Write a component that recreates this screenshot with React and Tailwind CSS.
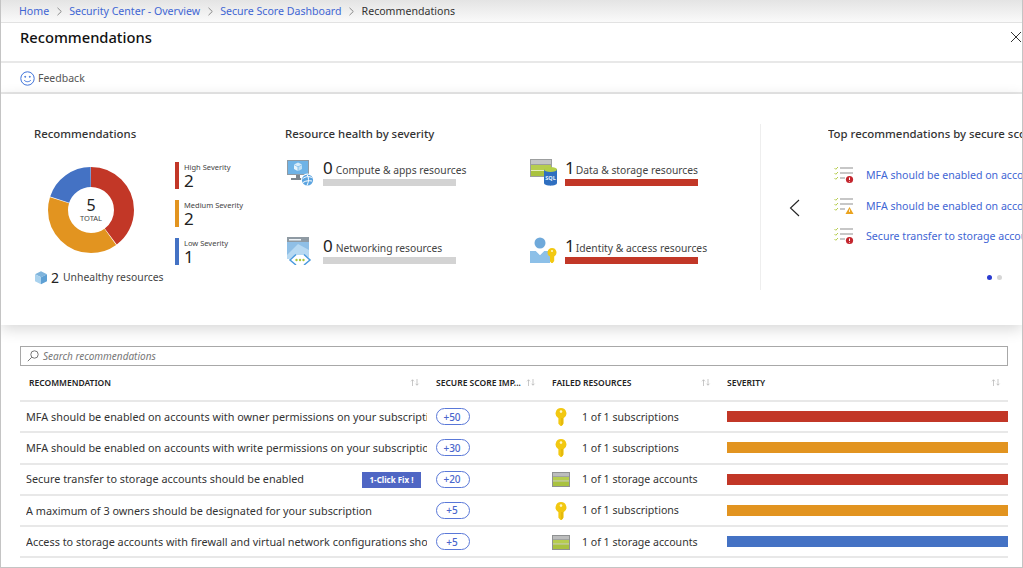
import React from "react";

const Key = ({ className = "" }) => (
  <svg width="12" height="18" viewBox="0 0 12 18" className={`shrink-0 ${className}`}>
    <path d="M6 0a5.500 5.500 0 0 1 2.600 10.300V15.500L6.800 18H5.600L3.400 15.800v-5.500A5.500 5.500 0 0 1 6 0z" fill="#f2c811" />
    <circle cx="6" cy="3.600" r="1.300" fill="#fff6c4" />
    <path d="M7 10v7" stroke="#d8ab0a" strokeWidth="1" />
  </svg>
);

const Storage = ({ w = 18, h = 15 }) => (
  <svg width={w} height={h} viewBox="0 0 18 15" className="shrink-0">
    <rect width="18" height="15" fill="#8f9192" />
    <rect x="1" y="1" width="16" height="3.400" fill="#bcbdbd" />
    <rect x="1" y="5" width="16" height="3.600" fill="#b6cd4e" />
    <rect x="1" y="8.600" width="16" height="1" fill="#e6efb8" />
    <rect x="1" y="9.600" width="16" height="4.400" fill="#a9c23f" />
  </svg>
);

const Smile = () => (
  <svg width="15" height="15" viewBox="0 0 15 15" fill="none" stroke="#3f73d9" strokeWidth="1" className="shrink-0">
    <circle cx="7.500" cy="7.500" r="6.700" />
    <circle cx="5.200" cy="5.800" r="0.500" fill="#3f73d9" />
    <circle cx="9.800" cy="5.800" r="0.500" fill="#3f73d9" />
    <path d="M4.200 9.200c1.600 2 5 2 6.600 0" />
  </svg>
);

const Chevron = () => (
  <svg width="7" height="9" viewBox="0 0 6 9" fill="none" stroke="#8a8a8a" strokeWidth="1" className="mx-[6.500px] shrink-0">
    <path d="M1 .8 4.800 4.500 1 8.200" />
  </svg>
);

const Donut = () => {
  const R = 33;
  const C = 2 * Math.PI * R;
  const segs = [
    { c: "#c23727", len: 0.4, off: 0 },
    { c: "#e29420", len: 0.4, off: 0.4 },
    { c: "#4472c4", len: 0.2, off: 0.8 },
  ];
  return (
    <svg width="88" height="88" viewBox="0 0 88 88" className="block">
      <g transform="rotate(-90 44 44)">
        {segs.map((s) => (
          <circle
            key={s.c}
            cx="44"
            cy="44"
            r={R}
            fill="none"
            stroke={s.c}
            strokeWidth="20"
            strokeDasharray={`${s.len * C - 0.6} ${C}`}
            strokeDashoffset={-s.off * C}
          />
        ))}
      </g>
    </svg>
  );
};

const Cube = () => (
  <svg width="12" height="14" viewBox="0 0 14 16" className="ml-[1px] shrink-0">
    <path d="M7 0 14 3.600 7 7.200 0 3.600z" fill="#7fb4dc" />
    <path d="M0 3.600 7 7.200v8.200L0 11.800z" fill="#a9d2ee" />
    <path d="M14 3.600 7 7.200v8.200l7-3.600z" fill="#5ea0d4" />
  </svg>
);

const ComputeIcon = () => (
  <svg width="27" height="28" viewBox="0 0 27 28">
    <rect x="0" y="1" width="22" height="15" fill="#8f9aa3" />
    <rect x="1" y="2" width="20" height="13" fill="#6fb3e6" />
    <path d="M11 3.500l4 2-4 2-4-2z" fill="#d7ecfa" />
    <path d="M7 6l3.600 2v4L7 10z" fill="#e9f5fc" />
    <path d="M15 6l-3.600 2v4l3.600-2z" fill="#bfe0f5" />
    <rect x="9" y="16" width="4" height="3" fill="#7c868e" />
    <rect x="4" y="19" width="12" height="2" fill="#7c868e" />
    <circle cx="20.500" cy="21" r="6.500" fill="#fff" />
    <circle cx="20.500" cy="21" r="5.600" fill="#5ba4e0" />
    <path d="M15.500 20c3-3 7-3 10-1M16 23.500c3-2 6-2 9-1.500M20 15.500c2 3 2 7 0 11" stroke="#fff" strokeWidth="1" fill="none" />
  </svg>
);

const NetworkIcon = () => (
  <svg width="27" height="28" viewBox="0 0 27 28">
    <rect x="0" y="0" width="22" height="22" fill="#8fbfe6" />
    <rect x="0" y="0" width="22" height="5" fill="#8f9aa3" />
    <rect x="2" y="2" width="12" height="1.500" fill="#eef3f7" />
    <path d="M0 18 11 7l11 6v9H0z" fill="#b7d9f2" />
    <path d="M8 18h10l7 5-7 5H8l-7-5z" fill="#fff" />
    <path d="M9 17.500 3 23l6 5M17 17.500l6 5.500-6 5" stroke="#4a9ade" strokeWidth="1.500" fill="none" />
    <circle cx="9.500" cy="23" r="1.200" fill="#a8c63e" />
    <circle cx="13" cy="23" r="1.200" fill="#a8c63e" />
    <circle cx="16.500" cy="23" r="1.200" fill="#a8c63e" />
  </svg>
);

const DataIcon = () => (
  <svg width="28" height="27" viewBox="0 0 28 27">
    <rect x="0" y="0" width="22" height="18" fill="#9c9e9f" />
    <rect x="1" y="1" width="20" height="4" fill="#c4c5c5" />
    <rect x="1" y="6" width="20" height="5" fill="#b6cd4e" />
    <rect x="1" y="11" width="20" height="1" fill="#e6efb8" />
    <rect x="1" y="12" width="20" height="5" fill="#a9c23f" />
    <path d="M14 10h13v14c0 3.500-13 3.500-13 0z" fill="#2f6fc0" />
    <ellipse cx="20.500" cy="10.500" rx="6.500" ry="2.500" fill="#b3cf48" />
    <text x="20.500" y="21" textAnchor="middle" fontSize="5.500" fontWeight="700" fill="#e5f0fa">SQL</text>
  </svg>
);

const IdentityIcon = () => (
  <svg width="28" height="27" viewBox="0 0 28 27">
    <circle cx="10" cy="6" r="5.500" fill="#6fa9da" />
    <path d="M0 14h6l4 4 4-4h6v12H0z" fill="#8dc0e8" />
    <path d="M6 14l4 4 4-4z" fill="#fff" />
    <path d="M22 11a4.500 4.500 0 0 1 2.200 8.400V24l-1.500 2h-1.400L20 24.500v-5A4.500 4.500 0 0 1 22 11z" fill="#f2c811" />
    <circle cx="22" cy="14" r="1" fill="#fff6c4" />
  </svg>
);

const ListIcon = ({ kind }) => (
  <svg width="20" height="18" viewBox="0 0 20 18" fill="none" className="shrink-0">
    <path d="M0.500 2 1.800 3.300 4 1M0.500 7 1.800 8.300 4 6M0.500 12 1.800 13.300 4 11" stroke="#b6cd4e" strokeWidth="1" />
    <path d="M6 2h13M6 7h13M6 12h5" stroke="#8f8f8f" strokeWidth="1.200" />
    {kind === "err" ? (
      <>
        <circle cx="15.500" cy="13.500" r="3.600" fill="#c4262e" />
        <path d="M15.500 11.500v2.500M15.500 15v.6" stroke="#fff" strokeWidth="1" />
      </>
    ) : (
      <>
        <path d="M15.500 10 19.500 17h-8z" fill="#eaa31f" />
        <path d="M15.500 12.500v2.500" stroke="#fff" strokeWidth="0.800" />
      </>
    )}
  </svg>
);

const Sort = () => (
  <svg width="10" height="7" viewBox="0 0 10 7" fill="none" stroke="#b0b0b0" strokeWidth="0.700" className="mb-[3px] shrink-0">
    <path d="M2.500 7V.8M1 2.300 2.500.8 4 2.300M7 0v6.200M5.500 4.700 7 6.200l1.500-1.500" />
  </svg>
);

const SevLegend = ({ color, label, value }) => (
  <div className="flex h-[27px] items-stretch gap-[5px]">
    <div className={`w-[4px] ${color}`} />
    <div className="flex flex-col">
      <span className="text-[7.500px] leading-[11px] text-[#444]">{label}</span>
      <span className="text-[17px] leading-[16px] text-[#222]">{value}</span>
    </div>
  </div>
);

const Health = ({ icon, n, label, bar, iconClass, labelGap }) => (
  <div className="flex h-[78px] items-start">
    <div className={`mt-[1px] shrink-0 ${iconClass}`}>{icon}</div>
    <div className="w-[133px]">
      <div className={`flex h-[20px] items-end whitespace-nowrap ${labelGap}`}>
        <span className="text-[17px] leading-[20px] text-[#222]">{n}</span>
        <span className="text-[10.300px] leading-[16px] text-[#444]">{label}</span>
      </div>
      <div className={`mt-[1px] h-[7px] ${bar}`} />
    </div>
  </div>
);

const rows = [
  ["MFA should be enabled on accounts with owner permissions on your subscription", "+50", "key", "1 of 1 subscriptions", "bg-[#c23727]"],
  ["MFA should be enabled on accounts with write permissions on your subscription", "+30", "key", "1 of 1 subscriptions", "bg-[#e29420]"],
  ["Secure transfer to storage accounts should be enabled", "+20", "st", "1 of 1 storage accounts", "bg-[#c23727]", true],
  ["A maximum of 3 owners should be designated for your subscription", "+5", "key", "1 of 1 subscriptions", "bg-[#e29420]"],
  ["Access to storage accounts with firewall and virtual network configurations should be restricted", "+5", "st", "1 of 1 storage accounts", "bg-[#4472c4]"],
];

const gridCols = "grid grid-cols-[416px_116px_175px_281px]";

export default function App() {
  return (
    <div
      className="flex h-[568px] w-[1023px] flex-col overflow-hidden border-r border-b border-l border-[#c4c4c4] bg-white"
      style={{ fontFamily: '"Noto Sans", sans-serif' }}
    >
      <nav className="flex h-[23px] shrink-0 items-center border-b border-[#e2e2e2] bg-gradient-to-b from-[#e4e4e4] to-[#fafafa] pt-[1px] pl-[18px] text-[10.600px] text-[#3f66d4]">
        <span>Home</span>
        <Chevron />
        <span>Security Center - Overview</span>
        <Chevron />
        <span>Secure Score Dashboard</span>
        <Chevron />
        <span className="text-[#333]">Recommendations</span>
      </nav>

      <header className="flex h-[40px] shrink-0 items-start justify-between border-b-2 border-[#e8e8e8] pl-[19px]">
        <h1 className="text-[14.700px] leading-[28px] font-medium text-[#111]">Recommendations</h1>
        <svg width="12" height="12" viewBox="0 0 12 12" className="mt-[8px]" stroke="#333" strokeWidth="1" fill="none">
          <path d="M1 1l10 10M11 1 1 11" />
        </svg>
      </header>

      <div className="flex h-[31px] shrink-0 items-center gap-[3px] border-b-2 border-[#e8e8e8] pt-[1px] pl-[19px] text-[10.500px] text-[#555]">
        <Smile />
        <span className="pt-[1px]">Feedback</span>
      </div>

      <section className="relative flex h-[231px] shrink-0 overflow-hidden pt-[30px] shadow-[0_4px_14px_rgba(0,0,0,0.16)]">
        <div className="ml-[33px] w-[251px] shrink-0">
          <h2 className="pt-[1px] text-[11.400px] leading-[18px] font-medium text-[#333]">Recommendations</h2>
          <div className="mt-[23px] ml-[13px] flex">
            <div className="relative h-[88px] w-[88px]">
              <Donut />
              <div className="absolute inset-0 flex flex-col items-center justify-center text-[#222]">
                <span className="text-[16px] leading-[15px]">5</span>
                <span className="text-[7.500px] leading-[10px] text-[#444]">TOTAL</span>
              </div>
            </div>
            <div className="mt-[-4px] ml-[40px] flex flex-col gap-[11px] whitespace-nowrap">
              <SevLegend color="bg-[#c23727]" label="High Severity" value="2" />
              <SevLegend color="bg-[#e29420]" label="Medium Severity" value="2" />
              <SevLegend color="bg-[#4472c4]" label="Low Severity" value="1" />
            </div>
          </div>
          <div className="mt-[4px] flex items-center gap-[4px] whitespace-nowrap">
            <Cube />
            <span className="text-[14px] leading-[18px] text-[#222]">2</span>
            <span className="text-[10.400px] text-[#444]">Unhealthy resources</span>
          </div>
        </div>

        <div className="w-[475px] shrink-0">
          <h2 className="pt-[1px] text-[11.400px] leading-[18px] font-medium text-[#333]">Resource health by severity</h2>
          <div className="mt-[15px] grid grid-cols-[245px_1fr]">
            <Health icon={<ComputeIcon />} n="0" label="Compute & apps resources" bar="bg-[#d3d3d3]" iconClass="ml-[2px] mr-[9px]" labelGap="gap-[3px]" />
            <Health icon={<DataIcon />} n="1" label="Data & storage resources" bar="bg-[#c23727]" iconClass="mr-[7px]" labelGap="gap-[1px]" />
            <Health icon={<NetworkIcon />} n="0" label="Networking resources" bar="bg-[#d3d3d3]" iconClass="ml-[2px] mr-[9px]" labelGap="gap-[3px]" />
            <Health icon={<IdentityIcon />} n="1" label="Identity & access resources" bar="bg-[#c23727]" iconClass="mr-[7px]" labelGap="gap-[1px]" />
          </div>
        </div>

        <div className="flex h-[166px] min-w-0 flex-1 border-l border-[#eeeeee]">
          <div className="flex w-[67px] shrink-0 items-center pt-[2px] pl-[28px]">
            <svg width="11" height="18" viewBox="0 0 11 18" fill="none" stroke="#222" strokeWidth="1.100">
              <path d="M10 1 1.500 9 10 17" />
            </svg>
          </div>
          <div className="relative min-w-0 flex-1 overflow-hidden">
            <h2 className="pt-[1px] text-[11.400px] leading-[18px] font-medium whitespace-nowrap text-[#333]">
              Top recommendations by secure score
            </h2>
            <ul className="mt-[23px] flex flex-col gap-[12.500px] text-[10.600px] leading-[18px] whitespace-nowrap text-[#3f66d4]">
              {[
                ["err", "MFA should be enabled on accounts with owner permissions"],
                ["warn", "MFA should be enabled on accounts with write permissions"],
                ["err", "Secure transfer to storage accounts should be enabled"],
              ].map(([k, t], i) => (
                <li key={i} className="ml-[6px] flex items-center gap-[12px]">
                  <ListIcon kind={k} />
                  <span>{t}</span>
                </li>
              ))}
            </ul>
            <div className="mt-[30px] ml-[159px] flex gap-[5px]">
              <span className="h-[5px] w-[5px] rounded-full bg-[#2a3bd0]" />
              <span className="h-[5px] w-[5px] rounded-full bg-[#d6d6d6]" />
            </div>
          </div>
        </div>
      </section>

      <div className="mt-[21px] ml-[19px] flex h-[20px] w-[988px] shrink-0 items-center gap-[4px] border border-[#a8a8a8] pl-[6px]">
        <svg width="12" height="12" viewBox="0 0 12 12" fill="none" stroke="#777" strokeWidth="1" className="shrink-0">
          <circle cx="7.500" cy="4.500" r="3.700" />
          <path d="M4.800 7.200 .8 11.200" />
        </svg>
        <span className="text-[10px] text-[#777] italic">Search recommendations</span>
      </div>

      <div className="ml-[19px] w-[988px]">
        <div className={`${gridCols} h-[36px] items-center border-b-2 border-[#e8e8e8] pt-[1px] text-[8.500px] font-semibold text-[#222]`}>
          <div className="flex items-center justify-between pr-[16px] pl-[9px]">
            <span>RECOMMENDATION</span>
            <Sort />
          </div>
          <div className="flex items-center justify-between pr-[16px]">
            <span className="whitespace-nowrap">SECURE SCORE IMP...</span>
            <Sort />
          </div>
          <div className="flex items-center justify-between pr-[16px]">
            <span>FAILED RESOURCES</span>
            <Sort />
          </div>
          <div className="flex items-center justify-between pr-[7px]">
            <span>SEVERITY</span>
            <Sort />
          </div>
        </div>
        {rows.map(([t, sc, ic, res, sev, fix], i) => (
          <div key={i} className={`${gridCols} h-[31.250px] items-center border-b-2 border-[#e8e8e8]`}>
            <div className="relative flex h-full items-center overflow-hidden pt-[1px] pr-[9px] pl-[6px]">
              <span className="overflow-hidden text-[10.850px] whitespace-nowrap text-[#333]">{t}</span>
              {fix && (
                <span className="absolute top-[7px] right-[15px] flex h-[16px] w-[59px] items-center justify-center bg-[#4f66c4] text-[8px] font-bold text-white">
                  1-Click Fix !
                </span>
              )}
            </div>
            <div>
              <span className="flex h-[17px] w-[34px] items-center justify-center rounded-full border border-[#5a78d8] pr-[2px] text-[10px] leading-none font-medium text-[#4a66cc]">
                {sc}
              </span>
            </div>
            <div className="flex items-center pt-[1px] text-[10.600px] text-[#333]">
              <div className="flex w-[30px] shrink-0 justify-start">
                {ic === "key" ? <Key className="ml-[3px]" /> : <Storage />}
              </div>
              <span className="pt-[1px] whitespace-nowrap">{res}</span>
            </div>
            <div className={`h-[11px] ${sev}`} />
          </div>
        ))}
      </div>
    </div>
  );
}
